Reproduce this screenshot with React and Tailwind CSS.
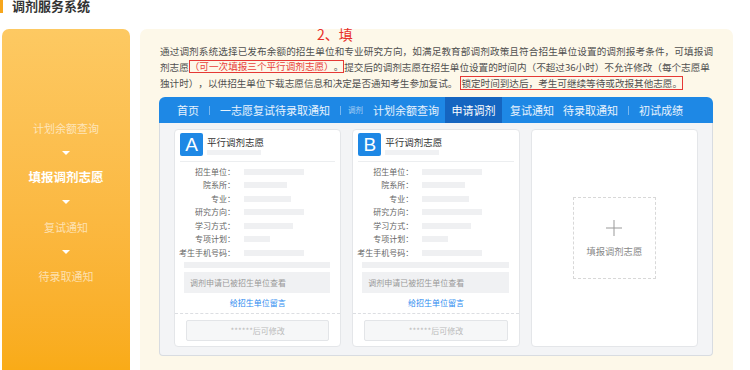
import React from "react";

const rows = [
    ["招生单位", 60],
    ["院系所", 43],
    ["专业", 47],
    ["研究方向", 60],
    ["学习方式", 49],
    ["专项计划", 26],
    ["考生手机号码", 60],
];

const ChoiceCard = ({ letter }) => {
    return (
        <div className="bg-white rounded-[4px] border border-[#e4e6e9] flex flex-col">
            <div className="flex items-start pt-[3px] pl-[5px] h-[31px]">
                <div className="w-[23px] h-[23px] bg-[#1e88e5] rounded-[2px] flex items-center justify-center text-white text-[19px] leading-none font-['Liberation_Sans',sans-serif]">
                    {letter}
                </div>
                <div className="ml-[4px] flex flex-col">
                    <span className="mt-[3px] text-[9.5px] leading-[12px] text-[#333]">平行调剂志愿</span>
                    <span className="mt-[2px] w-[54px] h-[5px] bg-[#f0f1f3]"></span>
                </div>
            </div>
            <div className="mx-[5px] h-px bg-[#eceef0]"></div>

            {/* applicant fields, values blurred out as grey bars */}
            <div className="pt-[3px] flex flex-col">
                {rows.map(([label, w]) => (
                    <div key={label} className="flex items-center h-[13.5px]">
                        <span className="w-[60px] text-right text-[8px] leading-none text-[#666]">{label}：</span>
                        <span className="ml-[9px] h-[6px] bg-[#eff0f2]" style={{ width: w }}></span>
                    </div>
                ))}
            </div>
            <div className="mt-[2.5px] ml-[9px] mr-[10px] h-[6px] bg-[#eff0f2]"></div>
            <div className="mt-[4px] ml-[9px] mr-[10px] h-[21px] bg-[#f0f1f3] flex items-center pl-[6px] text-[8px] text-[#999]">
                调剂申请已被招生单位查看
            </div>
            <div className="h-[20px] flex items-center justify-center text-[8px] text-[#2d8cf0]">给招生单位留言</div>
            <div className="border-t border-dashed border-[#dcdee2]"></div>
            <div className="mt-[6px] mx-[11px] mb-[5px] h-[21px] border border-[#e3e5e8] bg-[#f6f7f8] rounded-[2px] flex items-center justify-center text-[8px] text-[#bbb]">
                ******后可修改
            </div>
        </div>
    );
};

const Sep = ({ ml }) => <span className={`${ml} self-center w-px h-[9px] bg-white/40`}></span>;

const App = () => {
    return (
        <div className="w-[750px] h-[370px] bg-white overflow-hidden font-['Noto_Sans_CJK_SC','Noto_Sans',sans-serif]">
            {/* page title */}
            <div className="h-[29px] flex items-start">
                <div className="w-[3px] h-[13px] bg-[#f7a61c]"></div>
                <div className="ml-[9px] -mt-[1px] text-[13px] leading-[14px] font-bold text-[#333]">调剂服务系统</div>
            </div>

            <div className="flex h-[341px] pl-[2px]">
                {/* step list */}
                <div className="w-[128px] rounded-t-[7px] bg-linear-to-b from-[#fdc962] to-[#f9ab17] pt-[87px] flex flex-col">
                    <div className="h-[24.67px] flex items-center justify-center text-[11px] text-white/60">计划余额查询</div>
                    <div className="h-[24.67px] flex items-center justify-center">
                        <span className="w-0 h-0 border-x-[4px] border-x-transparent border-t-[4px] border-t-white"></span>
                    </div>
                    <div className="h-[24.67px] flex items-center justify-center text-[12.5px] font-bold text-white">填报调剂志愿</div>
                    <div className="h-[24.67px] flex items-center justify-center">
                        <span className="w-0 h-0 border-x-[4px] border-x-transparent border-t-[4px] border-t-white"></span>
                    </div>
                    <div className="h-[24.67px] flex items-center justify-center text-[11px] text-white/60">复试通知</div>
                    <div className="h-[24.67px] flex items-center justify-center">
                        <span className="w-0 h-0 border-x-[4px] border-x-transparent border-t-[4px] border-t-white"></span>
                    </div>
                    <div className="h-[24.67px] flex items-center justify-center text-[11px] text-white/60">待录取通知</div>
                </div>

                {/* main panel */}
                <div className="relative ml-[10px] w-[593px] rounded-t-[7px] bg-[#fdf8e9] pl-[19px] pt-[14px]">
                    <span className="absolute left-[177px] -top-[3px] text-[14px] leading-[16px] text-[#e8302a]">2、填</span>

                    <div className="ml-[1px] w-[553px] text-[9.6px] leading-[16px] text-[#505050] [text-spacing-trim:space-all]">
                        <div className="text-justify [text-align-last:justify]">
                            通过调剂系统选择已发布余额的招生单位和专业研究方向，如满足教育部调剂政策且符合招生单位设置的调剂报考条件，可填报调
                        </div>
                        <div className="h-[16px] whitespace-nowrap">
                            剂志愿
                            <span className="inline-block align-top mt-[1px] leading-[11px] border-[1.5px] border-[#e53935]">
                                <span className="text-[#e8413b]">（可一次填报三个平行调剂志愿）</span>。
                            </span>
                            提交后的调剂志愿在招生单位设置的时间内（不超过36小时）不允许修改（每个志愿单
                        </div>
                        <div className="h-[16px] whitespace-nowrap">
                            独计时），以供招生单位下载志愿信息和决定是否通知考生参加复试。
                            <span className="ml-[3px] inline-block align-top mt-[1px] leading-[12px] border-[1.5px] border-[#e53935]">
                                锁定时间到达后，考生可继续等待或改报其他志愿。
                            </span>
                        </div>
                    </div>

                    {/* nav tabs */}
                    <div className="mt-[6px] w-[554px] h-[26px] rounded-t-[6px] bg-[#1e88e5] flex text-[11px] text-white/90">
                        <span className="ml-[18px] flex items-center">首页</span>
                        <Sep ml="ml-[10px]" />
                        <span className="ml-[10px] flex items-center">一志愿复试待录取通知</span>
                        <Sep ml="ml-[10px]" />
                        <span className="ml-[7px] flex items-center text-[7.5px] text-white/60">调剂</span>
                        <span className="ml-[10px] flex items-center">计划余额查询</span>
                        <span className="ml-[6px] w-[57px] flex items-center justify-center bg-[#1565c0] text-white">申请调剂</span>
                        <span className="ml-[8px] flex items-center">复试通知</span>
                        <span className="ml-[9px] flex items-center">待录取通知</span>
                        <Sep ml="ml-[10px]" />
                        <span className="ml-[10px] flex items-center">初试成绩</span>
                    </div>

                    <div className="w-[554px] h-[233px] bg-[#f3f4f6] border-x border-b border-[#d8dce1] rounded-b-[4px] pt-[6px] pl-[14px] pr-[14px] pb-[8px] grid grid-cols-3 gap-[11px]">
                        <ChoiceCard letter="A" />
                        <ChoiceCard letter="B" />
                        <div className="bg-white rounded-[4px] border border-[#e4e6e9] flex items-center justify-center">
                            <div className="w-[83px] h-[82px] border border-dashed border-[#d8d8d8] flex flex-col items-center pt-[21px]">
                                <svg width="18" height="18" viewBox="0 0 18 18">
                                    <path d="M9 1v16M1 9h16" stroke="#999" strokeWidth="1" fill="none" />
                                </svg>
                                <span className="mt-[8px] text-[9.3px] text-[#888]">填报调剂志愿</span>
                            </div>
                        </div>
                    </div>
                </div>
            </div>
        </div>
    );
};

export default App;
